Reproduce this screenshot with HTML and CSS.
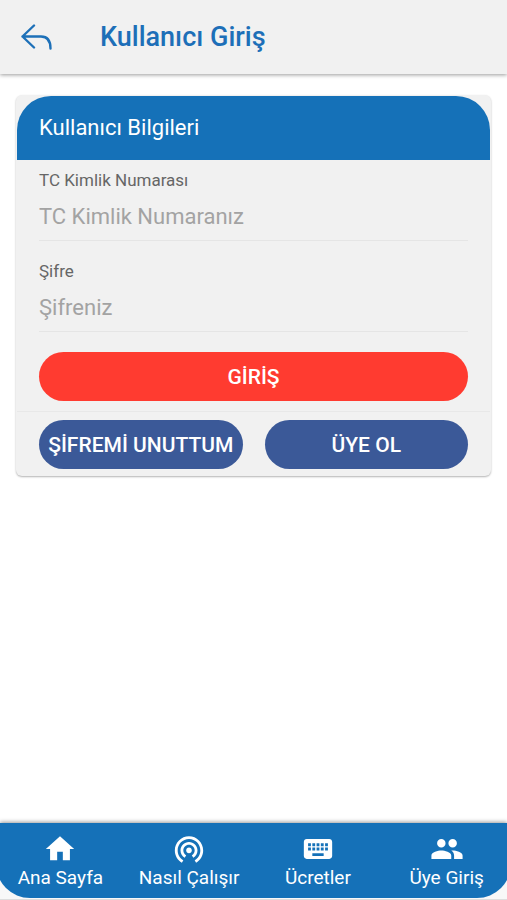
FILE: index.html
```html
<!DOCTYPE html>
<html lang="tr">
<head>
<meta charset="utf-8">
<meta name="viewport" content="width=device-width, initial-scale=1">
<title>Kullanıcı Giriş</title>
<link rel="stylesheet" href="styles.css">
</head>
<body>
<header class="topbar">
  <a class="back" href="#" aria-label="Geri">
    <svg viewBox="0 0 32 26" width="32" height="26" aria-hidden="true"><path d="M14 1.500 2.500 12.500l11.500 11M2.500 12.500H21c6 0 9.500 4 9.500 12"/></svg>
  </a>
  <h1 class="title">Kullanıcı Giriş</h1>
</header>
<main class="content">
  <form class="card">
    <h2 class="card-header">Kullanıcı Bilgileri</h2>
    <div class="card-body">
      <div class="field">
        <label for="tc">TC Kimlik Numarası</label>
        <input id="tc" type="text" inputmode="numeric" placeholder="TC Kimlik Numaranız">
      </div>
      <div class="field">
        <label for="sifre">Şifre</label>
        <input id="sifre" type="password" placeholder="Şifreniz">
      </div>
      <button class="btn btn-login" type="submit">GİRİŞ</button>
    </div>
    <div class="card-footer">
      <button class="btn" type="button">ŞİFREMİ UNUTTUM</button>
      <button class="btn" type="button">ÜYE OL</button>
    </div>
  </form>
</main>
<div class="tabbar-wrap">
  <nav class="tabbar">
    <a class="tab" href="#">
      <svg viewBox="0 0 24 24" aria-hidden="true"><path d="M10 20v-6h4v6h5v-8h3L12 3 2 12h3v8z"/></svg>
      <span>Ana Sayfa</span>
    </a>
    <a class="tab" href="#">
      <svg viewBox="0 0 24 24" aria-hidden="true"><path d="M12 11c-1.1 0-2 .9-2 2s.9 2 2 2 2-.9 2-2-.9-2-2-2zm6 2c0-3.31-2.69-6-6-6s-6 2.69-6 6c0 2.22 1.21 4.15 3 5.19l1-1.74c-1.19-.7-2-1.97-2-3.45 0-2.21 1.79-4 4-4s4 1.79 4 4c0 1.48-.81 2.75-2 3.45l1 1.74c1.79-1.04 3-2.97 3-5.19zM12 3C6.48 3 2 7.48 2 13c0 3.7 2.01 6.92 4.99 8.65l1-1.73C5.61 18.53 4 15.96 4 13c0-4.42 3.58-8 8-8s8 3.58 8 8c0 2.96-1.61 5.53-4 6.92l1 1.73c2.99-1.73 5-4.95 5-8.65 0-5.52-4.48-10-10-10z"/></svg>
      <span>Nasıl Çalışır</span>
    </a>
    <a class="tab" href="#">
      <svg viewBox="0 0 24 24" aria-hidden="true"><path d="M20 5H4c-1.1 0-1.99.9-1.99 2L2 17c0 1.1.9 2 2 2h16c1.1 0 2-.9 2-2V7c0-1.1-.9-2-2-2zm-9 3h2v2h-2V8zm0 3h2v2h-2v-2zM8 8h2v2H8V8zm0 3h2v2H8v-2zm-1 2H5v-2h2v2zm0-3H5V8h2v2zm9 7H8v-2h8v2zm0-4h-2v-2h2v2zm0-3h-2V8h2v2zm3 3h-2v-2h2v2zm0-3h-2V8h2v2z"/></svg>
      <span>Ücretler</span>
    </a>
    <a class="tab" href="#">
      <svg viewBox="0 0 24 24" aria-hidden="true"><path d="M16 11c1.66 0 2.99-1.34 2.99-3S17.66 5 16 5s-3 1.34-3 3 1.34 3 3 3zm-8 0c1.66 0 2.99-1.34 2.99-3S9.66 5 8 5 5 6.34 5 8s1.34 3 3 3zm0 2c-2.33 0-7 1.17-7 3.5V19h14v-2.500c0-2.330-4.670-3.500-7-3.500zm8 0c-.29 0-.62.02-.97.05 1.160.84 1.970 1.970 1.970 3.450V19h6v-2.500c0-2.330-4.670-3.500-7-3.500z"/></svg>
      <span>Üye Giriş</span>
    </a>
  </nav>
</div>
</body>
</html>
```
FILE: styles.css
```css
* {
  box-sizing: border-box;
}

body {
  margin: 0;
  min-height: 100vh;
  display: flex;
  flex-direction: column;
  background: #fff;
  font-family: Roboto, "Liberation Sans", sans-serif;
}

.topbar {
  display: flex;
  align-items: center;
  gap: 48px;
  height: 74px;
  padding: 0 20px;
  background: #f1f1f1;
  box-shadow: 0 1px 4px rgba(0, 0, 0, 0.4);
}

.back {
  display: flex;
}

.back svg {
  fill: none;
  stroke: #1d70b8;
  stroke-width: 2.4;
  stroke-linecap: round;
  stroke-linejoin: round;
}

.title {
  margin: 0;
  font-size: 27px;
  font-weight: 500;
  color: #1d6fb8;
}

.content {
  flex: 1;
  padding: 21px 16px;
}

.card {
  padding: 1px 1px 0;
  background: #f1f1f1;
  border-radius: 6px;
  box-shadow: 0 1px 2px rgba(0, 0, 0, 0.3);
}

.card-header {
  margin: 0;
  padding: 0 22px;
  background: #1571b8;
  color: #fff;
  border-radius: 34px 34px 0 0;
  font-size: 22px;
  font-weight: 400;
  line-height: 64px;
}

.card-body {
  padding: 10px 22px;
  border-bottom: 1px solid #e8e8e8;
}

.field {
  margin-bottom: 20px;
}

.field label {
  display: block;
  color: #666;
  font-size: 17px;
  line-height: 20px;
}

.field input {
  display: block;
  width: 100%;
  height: 51px;
  padding: 3px 0 0;
  border: 0;
  border-bottom: 1px solid #e5e5e5;
  outline: 0;
  background: transparent;
  color: #333;
  font: 400 22px Roboto, "Liberation Sans", sans-serif;
}

.field input::placeholder {
  color: #a3a3a3;
}

.btn {
  display: block;
  width: 100%;
  height: 49px;
  padding: 0;
  border: 0;
  border-radius: 25px;
  background: #3b5998;
  color: #fff;
  font: 500 21px Roboto, "Liberation Sans", sans-serif;
  white-space: nowrap;
}

.btn-login {
  background: #ff3b30;
}

.card-footer {
  display: grid;
  grid-template-columns: 1fr 1fr;
  gap: 22px;
  padding: 8px 22px 7px;
}

.tabbar-wrap {
  overflow-x: clip;
  padding-bottom: 1px;
  background: #f8f8f8;
  border-bottom: 1px solid #ddd;
  box-shadow: 0 -1px 4px rgba(0, 0, 0, 0.4);
}

.tabbar {
  display: grid;
  grid-template-columns: repeat(4, 1fr);
  height: 75px;
  margin: 0 -4px;
  background: #1571b8;
  border-radius: 0 0 34px 34px;
}

.tab {
  display: flex;
  flex-direction: column;
  align-items: center;
  padding-top: 9px;
  color: #fff;
  font-size: 19px;
  line-height: 24px;
  text-decoration: none;
  white-space: nowrap;
}

.tab svg {
  width: 34px;
  height: 34px;
  fill: currentColor;
}
```
